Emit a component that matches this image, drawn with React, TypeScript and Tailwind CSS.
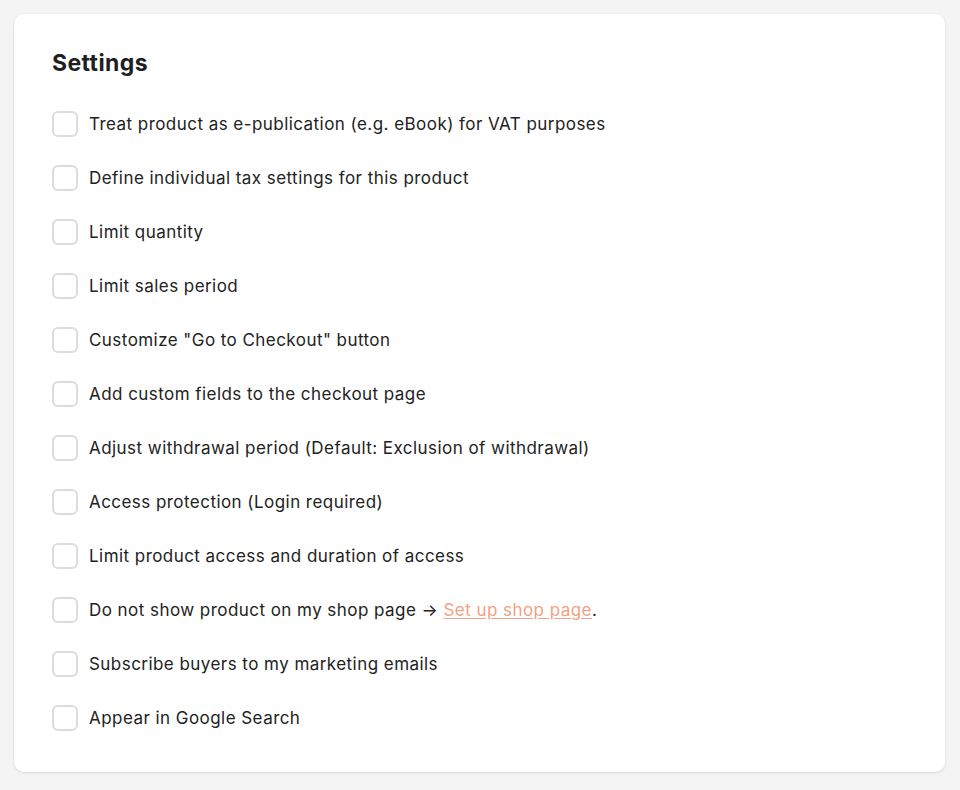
import React from 'react'

const items: React.ReactNode[] = [
  'Treat product as e-publication (e.g. eBook) for VAT purposes',
  'Define individual tax settings for this product',
  'Limit quantity',
  'Limit sales period',
  'Customize "Go to Checkout" button',
  'Add custom fields to the checkout page',
  'Adjust withdrawal period (Default: Exclusion of withdrawal)',
  'Access protection (Login required)',
  'Limit product access and duration of access',
  <>
    Do not show product on my shop page →{' '}
    <a href="#" className="text-[#f3a184] underline underline-offset-2">
      Set up shop page
    </a>
    .
  </>,
  'Subscribe buyers to my marketing emails',
  'Appear in Google Search',
]

const SettingRow = ({ label }: { label: React.ReactNode }) => {
  return (
    <label className="flex items-center h-[26px] cursor-pointer">
      {/* Checkbox */}
      <span className="w-[26px] h-[26px] rounded-[6px] border-2 border-[#dcdcdc] bg-white shrink-0 mr-[11px]" />
      <span className="text-[17px] leading-[26px] text-[#222] tracking-[0.45px]">
        {label}
      </span>
    </label>
  )
}

export default function App() {
  return (
    <div
      className="min-h-[790px] w-full bg-[#f4f4f4] pt-[14px] pl-[14px] pr-[15px]"
      style={{ fontFamily: 'Inter, "Noto Sans", sans-serif' }}
    >
      <div className="bg-white rounded-[10px] shadow-[0_1px_3px_rgba(0,0,0,0.12)] pl-[38px] pt-[35px] pb-[41px]">
        <h2 className="text-[23px] leading-[28px] font-bold text-[#1f1f1f] tracking-[0.4px] mb-[34px]">
          Settings
        </h2>

        <div className="flex flex-col gap-[28px]">
          {items.map((item, index) => (
            <SettingRow key={index} label={item} />
          ))}
        </div>
      </div>
    </div>
  )
}
